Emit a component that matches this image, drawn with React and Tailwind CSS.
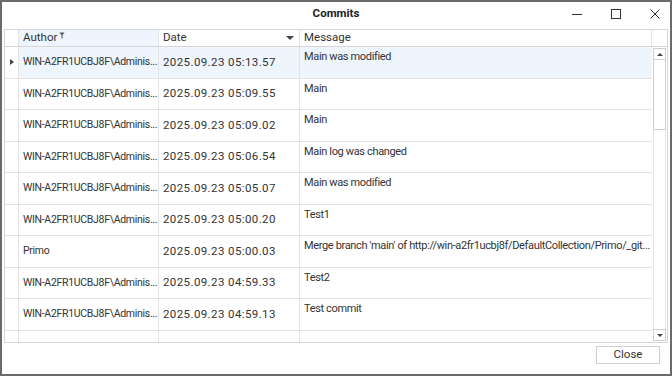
const rows = [
  { author: "WIN-A2FR1UCBJ8F\\Adminis...", date: "2025.09.23 05:13.57", msg: "Main was modified", sel: true },
  { author: "WIN-A2FR1UCBJ8F\\Adminis...", date: "2025.09.23 05:09.55", msg: "Main" },
  { author: "WIN-A2FR1UCBJ8F\\Adminis...", date: "2025.09.23 05:09.02", msg: "Main" },
  { author: "WIN-A2FR1UCBJ8F\\Adminis...", date: "2025.09.23 05:06.54", msg: "Main log was changed" },
  { author: "WIN-A2FR1UCBJ8F\\Adminis...", date: "2025.09.23 05:05.07", msg: "Main was modified" },
  { author: "WIN-A2FR1UCBJ8F\\Adminis...", date: "2025.09.23 05:00.20", msg: "Test1" },
  { author: "Primo", date: "2025.09.23 05:00.03", msg: "Merge branch 'main' of http://win-a2fr1ucbj8f/DefaultCollection/Primo/_git..." },
  { author: "WIN-A2FR1UCBJ8F\\Adminis...", date: "2025.09.23 04:59.33", msg: "Test2" },
  { author: "WIN-A2FR1UCBJ8F\\Adminis...", date: "2025.09.23 04:59.13", msg: "Test commit" },
];

function Row({ r }) {
  const bg = r.sel ? "bg-[#eef5fd]" : "bg-white";
  return (
    <div className="flex h-[31.5px] shrink-0 border-b border-[#e3e3e3]">
      <div className="w-[14px] shrink-0 border-r border-[#e3e3e3] flex items-center justify-center bg-white">
        {r.sel && <span className="block w-0 h-0 border-y-[3px] border-y-transparent border-l-[4px] border-l-[#444]" />}
      </div>
      <div className={`w-[140px] shrink-0 border-r border-[#e3e3e3] flex items-center pl-[4px] text-[10.5px] tracking-[-0.3px] ${bg}`}>
        <span className="whitespace-nowrap">{r.author}</span>
      </div>
      <div className={`w-[141px] shrink-0 border-r border-[#e3e3e3] flex items-center pl-[4px] text-[11.5px] tracking-[0.4px] ${bg}`}>
        <span className="whitespace-nowrap">{r.date}</span>
      </div>
      <div className={`flex-1 min-w-0 pl-[4px] pt-[2px] overflow-hidden text-[11px] tracking-[-0.35px] ${bg}`}>
        <span className="whitespace-nowrap">{r.msg}</span>
      </div>
    </div>
  );
}

export default function App() {
  return (
    <div
      className="w-[672px] h-[376px] bg-white border-2 border-[#6b6b6b] flex flex-col text-[11.5px] text-[#333]"
      style={{ fontFamily: 'Roboto, "Noto Sans", sans-serif' }}
    >
      <div className="h-[27px] shrink-0 pb-[4px] grid grid-cols-[1fr_auto_1fr] items-center">
        <div />
        <div className="font-bold text-[11.5px] text-[#222]">Commits</div>
        <div className="flex justify-end items-center pr-[9px] gap-[27px] text-[#333]">
          <svg width="12" height="12" viewBox="0 0 12 12"><path d="M1 6.5h10" stroke="#333" strokeWidth="1" /></svg>
          <svg width="12" height="12" viewBox="0 0 12 12"><rect x="1.5" y="1.5" width="9" height="9" fill="none" stroke="#333" strokeWidth="1" /></svg>
          <svg width="12" height="12" viewBox="0 0 12 12"><path d="M1.5 1.5l9 9M10.5 1.5l-9 9" stroke="#333" strokeWidth="1" /></svg>
        </div>
      </div>

      <div className="mx-[2px] h-[314px] shrink-0 border border-[#d6d6d6] flex flex-col overflow-hidden">
        <div className="flex h-[17px] shrink-0 border-b border-[#d6d6d6]">
          <div className="w-[14px] shrink-0 border-r border-[#e3e3e3]" />
          <div className="w-[140px] shrink-0 border-r border-[#e3e3e3] bg-[#eef5fd] flex items-center pl-[4px]">
            <span>Author</span>
            <svg className="ml-[2px] -mt-[6px]" width="6" height="7" viewBox="0 0 6 7">
              <path d="M0.5 0.5h5L3.5 3v3.5h-1V3z" fill="#555" />
            </svg>
          </div>
          <div className="w-[141px] shrink-0 border-r border-[#e3e3e3] flex items-center justify-between pl-[4px] pr-[5px]">
            <span>Date</span>
            <span className="block w-0 h-0 border-x-[4px] border-x-transparent border-t-[4px] border-t-[#444]" />
          </div>
          <div className="flex-1 border-r border-[#e3e3e3] flex items-center pl-[4px]">
            <span>Message</span>
          </div>
          <div className="w-[15px] shrink-0" />
        </div>
        <div className="flex flex-1 min-h-0">
          <div className="flex-1 min-w-0 flex flex-col overflow-hidden">
            {rows.map((r, i) => (
              <Row key={i} r={r} />
            ))}
            <div className="flex h-[20px] shrink-0">
              <div className="w-[14px] shrink-0 border-r border-[#e3e3e3]" />
              <div className="w-[140px] shrink-0 border-r border-[#e3e3e3]" />
              <div className="w-[141px] shrink-0 border-r border-[#e3e3e3]" />
              <div className="flex-1" />
            </div>
          </div>
          <div className="w-[15px] shrink-0 flex flex-col px-[1px] py-[1px] bg-white">
            <div className="h-[12px] border border-[#cfcfcf] flex items-center justify-center">
              <span className="block w-0 h-0 border-x-[3px] border-x-transparent border-b-[3px] border-b-[#444]" />
            </div>
            <div className="h-[70px] border-x border-b border-[#cfcfcf]" />
            <div className="flex-1 border-x border-[#e6e6e6]" />
            <div className="h-[12px] border border-[#cfcfcf] flex items-center justify-center">
              <span className="block w-0 h-0 border-x-[3px] border-x-transparent border-t-[3px] border-t-[#444]" />
            </div>
          </div>
        </div>
      </div>

      <div className="flex-1 flex justify-end items-start pt-[3px] pr-[10px]">
        <button className="w-[64px] h-[18px] border border-[#cfcfcf] bg-white text-[11.5px] text-[#333] flex items-center justify-center">
          Close
        </button>
      </div>
    </div>
  );
}
